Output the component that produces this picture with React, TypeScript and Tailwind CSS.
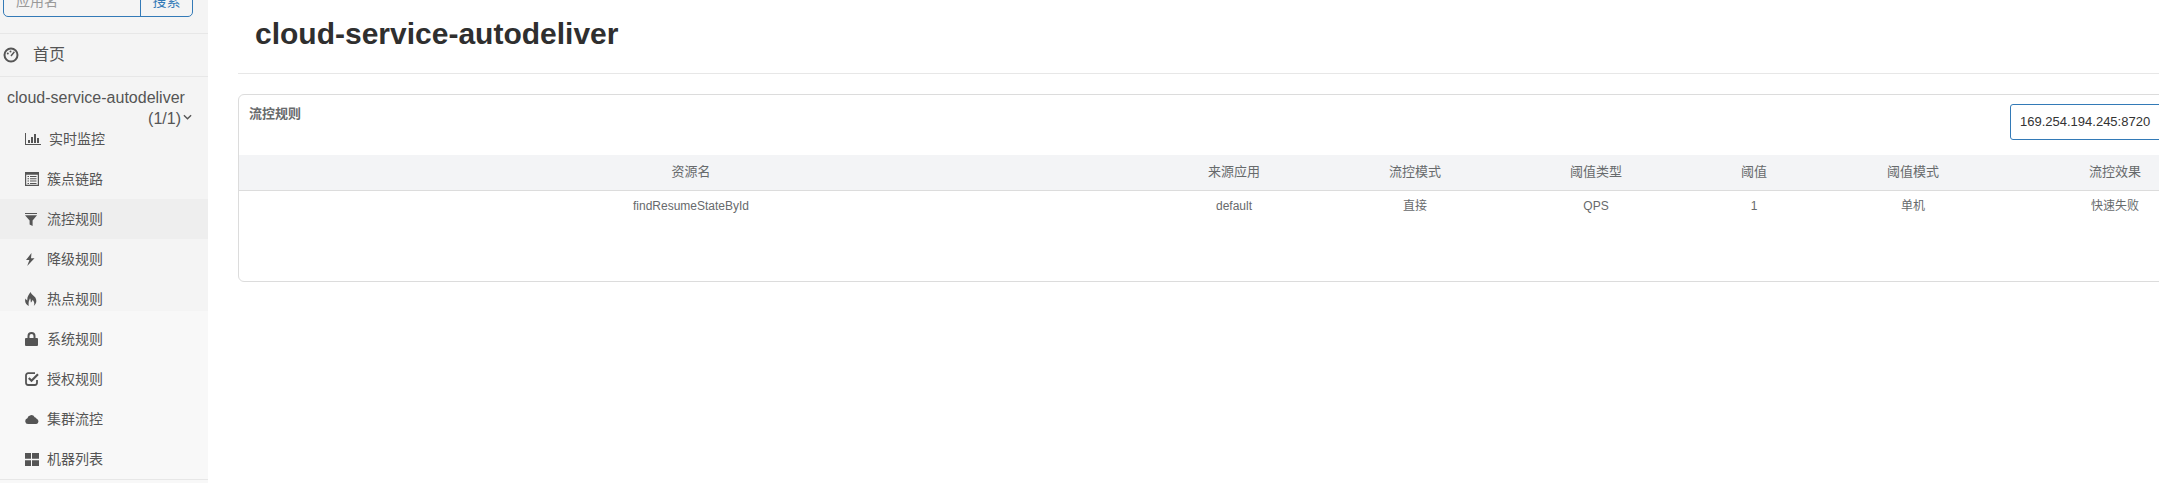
import React from 'react';

const FONT = "font-['Liberation_Sans','Noto_Sans_CJK_SC',sans-serif]";

function DashIcon() {
  return (
    <svg viewBox="0 0 16 16" className="w-[16px] h-[16px]" fill="none">
      <circle cx="8" cy="8" r="6.5" stroke="#555" strokeWidth="2" />
      <circle cx="4.8" cy="6.6" r="1" fill="#555" />
      <circle cx="7.5" cy="4.6" r="1" fill="#555" />
      <path d="M8 9l3.4-4.2" stroke="#555" strokeWidth="1.4" />
    </svg>
  );
}

function BarsIcon() {
  return (
    <svg viewBox="0 0 16 12" className="w-[16px] h-[12px]" fill="#555">
      <path d="M0 0h1v11h15v1H0zM3 7h2v3H3zM6 4h2v6H6zM9 1h2v9H9zM12 5h2v5h-2z" />
    </svg>
  );
}

function ListIcon() {
  return (
    <svg viewBox="0 0 14 14" className="w-[14px] h-[14px]" fill="#555">
      <path d="M0 0h14v14H0zM1.2 2.8v10h11.6v-10z" fillRule="evenodd" />
      <path d="M2.5 4h1.5v1H2.5zM5 4h6.5v1H5zM2.5 6.3h1.5v1H2.5zM5 6.3h6.5v1H5zM2.5 8.6h1.5v1H2.5zM5 8.6h6.5v1H5zM2.5 10.9h1.5v1H2.5zM5 10.9h6.5v1H5z" />
    </svg>
  );
}

function FilterIcon() {
  return (
    <svg viewBox="0 0 12 13" className="w-[12px] h-[13px]" fill="#555">
      <path d="M0 0h12v1H0zM0 2.2h12L7.6 7.4V13l-3-1.4V7.4z" />
    </svg>
  );
}

function BoltIcon() {
  return (
    <svg viewBox="0 0 10 13" className="w-[10px] h-[13px]" fill="#555">
      <path d="M6.5 0L1 7h3.4L2.2 13 9.5 5.2H6z" />
    </svg>
  );
}

function FireIcon() {
  return (
    <svg viewBox="0 0 12 14" className="w-[12px] h-[14px]" fill="#555">
      <path d="M5.5 0c1 2.6 3.3 3.4 4.8 5.6 1.6 2.6 1.6 6-1.6 8.4 1-2 .8-4-1.2-6.2-.2 1.4-.8 2-1.6 2.6C5.6 9 5.8 7.6 5 6.2 4.600 8 3 9.400 3.800 14 .8 12.600-.8 9.400.6 6.600c.4 1 1 1.600 1.800 1.800C1.800 5 3.800 2.600 5.500 0z" />
    </svg>
  );
}

function LockIcon() {
  return (
    <svg viewBox="0 0 13 14" className="w-[13px] h-[14px]" fill="#555">
      <path d="M2.500 6V4a4 4 0 018 0v2h1.500a1 1 0 011 1v6a1 1 0 01-1 1H1a1 1 0 01-1-1V7a1 1 0 011-1zM4.500 6h4V4a2 2 0 00-4 0z" fillRule="evenodd" />
    </svg>
  );
}

function CheckIcon() {
  return (
    <svg viewBox="0 0 14 14" className="w-[14px] h-[14px]" fill="none" stroke="#555">
      <path d="M10 1.200H3.200A2.200 2.200 0 001 3.400v7.400A2.200 2.200 0 003.200 13h6.600a2.200 2.200 0 002.200-2.200V8" strokeWidth="1.800" />
      <path d="M3.800 6l2.700 2.700L13 2.200" strokeWidth="2.200" />
    </svg>
  );
}

function CloudIcon() {
  return (
    <svg viewBox="0 0 14 9" className="w-[14px] h-[9px]" fill="#555">
      <path d="M3 9a2.900 2.900 0 01-.6-5.700A3.900 3.900 0 019.700 2.200 2.500 2.500 0 0111.600 3.800 2.700 2.700 0 0111.300 9z" />
    </svg>
  );
}

function GridIcon() {
  return (
    <svg viewBox="0 0 14 13" className="w-[14px] h-[13px]" fill="#555">
      <path d="M0 0h6v5.800H0zM7 0h7v5.800H7zM0 7.200h6V13H0zM7 7.200h7V13H7z" />
    </svg>
  );
}

const navItems = [
  { label: '实时监控', icon: <BarsIcon />, slot: 'w-[24px]' },
  { label: '簇点链路', icon: <ListIcon />, slot: 'w-[22px]' },
  { label: '流控规则', icon: <FilterIcon />, slot: 'w-[22px]', active: true },
  { label: '降级规则', icon: <BoltIcon />, slot: 'w-[22px]' },
  { label: '热点规则', icon: <FireIcon />, slot: 'w-[22px]' },
  { label: '系统规则', icon: <LockIcon />, slot: 'w-[22px]' },
  { label: '授权规则', icon: <CheckIcon />, slot: 'w-[22px]' },
  { label: '集群流控', icon: <CloudIcon />, slot: 'w-[22px]' },
  { label: '机器列表', icon: <GridIcon />, slot: 'w-[22px]' },
];

const columns = [
  { label: '资源名', value: 'findResumeStateById', width: 'w-[904px]' },
  { label: '来源应用', value: 'default', width: 'w-[182px]' },
  { label: '流控模式', value: '直接', width: 'w-[180px]' },
  { label: '阈值类型', value: 'QPS', width: 'w-[182px]' },
  { label: '阈值', value: '1', width: 'w-[134px]' },
  { label: '阈值模式', value: '单机', width: 'w-[184px]' },
  { label: '流控效果', value: '快速失败', width: 'w-[220px]' },
];

export default function App() {
  return (
    <div className={`${FONT} flex h-[483px] w-[2159px] overflow-hidden bg-white text-[#676a6c]`}>
      <aside className="w-[208px] shrink-0 flex flex-col bg-[linear-gradient(#f4f4f4_311px,#f8f8f8_311px)] text-[#555]">
        <div className="h-[34px] shrink-0 overflow-hidden flex items-end pb-[16px] px-[3px] border-b border-[#e7e7e7]">
          <div className="flex w-[190px] h-[34px] shrink-0 border border-[#337ab7] rounded-b-[5px] text-[14px]">
            <div className="w-[136px] flex items-center px-[12px] pt-[2px] text-[#999]">应用名</div>
            <div className="flex-1 flex items-center justify-center pt-[2px] border-l border-[#337ab7] text-[#337ab7]">搜索</div>
          </div>
        </div>
        <div className="h-[43px] shrink-0 flex items-center gap-[14px] pl-[3px] border-b border-[#e7e7e7] text-[16px]">
          <DashIcon />
          <span>首页</span>
        </div>
        <div className="h-[42px] shrink-0 pt-[10px] pl-[7px] pr-[16px] text-[16px] leading-[21px] whitespace-nowrap">
          cloud-service-autodeliver
          <div className="flex justify-end items-center gap-[2px]">
            (1/1)
            <svg viewBox="0 0 10 6" className="w-[9px] h-[6px] mb-[4px]" fill="none" stroke="#555" strokeWidth="1.5">
              <path d="M1 1l4 4 4-4" />
            </svg>
          </div>
        </div>
        <nav className="flex flex-col">
          {navItems.map((item) => (
            <div
              key={item.label}
              className={`h-[40px] shrink-0 flex items-center pl-[25px] text-[14px] ${item.active ? 'bg-[#eeeeee]' : ''}`}
            >
              <span className={`${item.slot} flex`}>{item.icon}</span>
              <span>{item.label}</span>
            </div>
          ))}
        </nav>
        <div className="border-t border-[#e7e7e7]" />
      </aside>

      <main className="flex-1 min-w-0 pl-[30px]">
        <div className="h-[74px] border-b border-[#e7e7e7] pl-[17px] flex items-center">
          <h1 className="text-[30px] font-bold text-[#2f2f2f] pb-[6px]">cloud-service-autodeliver</h1>
        </div>
        <section className="mt-[20px] w-[2000px] h-[188px] border border-[#dcdcdc] rounded-[6px]">
          <div className="h-[60px] flex justify-between pl-[10px]">
            <h3 className="pt-[10px] text-[13px] font-bold text-[#676a6c] leading-[18px]">流控规则</h3>
            <div className="mt-[9px] w-[227px] h-[36px] border border-[#337ab7] rounded-[3px] flex items-center pl-[9px] text-[13px] text-[#333]">
              169.254.194.245:8720
            </div>
          </div>
          <table className="table-fixed border-collapse text-[12px]">
            <thead>
              <tr className="h-[35px] bg-[#f3f4f6] border-b border-[#dcdcdc] text-[13px]">
                {columns.map((c) => (
                  <th key={c.label} className={`${c.width} pb-[2px] font-normal text-center`}>{c.label}</th>
                ))}
              </tr>
            </thead>
            <tbody>
              <tr className="h-[31px]">
                {columns.map((c) => (
                  <td key={c.label} className="text-center">{c.value}</td>
                ))}
              </tr>
            </tbody>
          </table>
        </section>
      </main>
    </div>
  );
}
